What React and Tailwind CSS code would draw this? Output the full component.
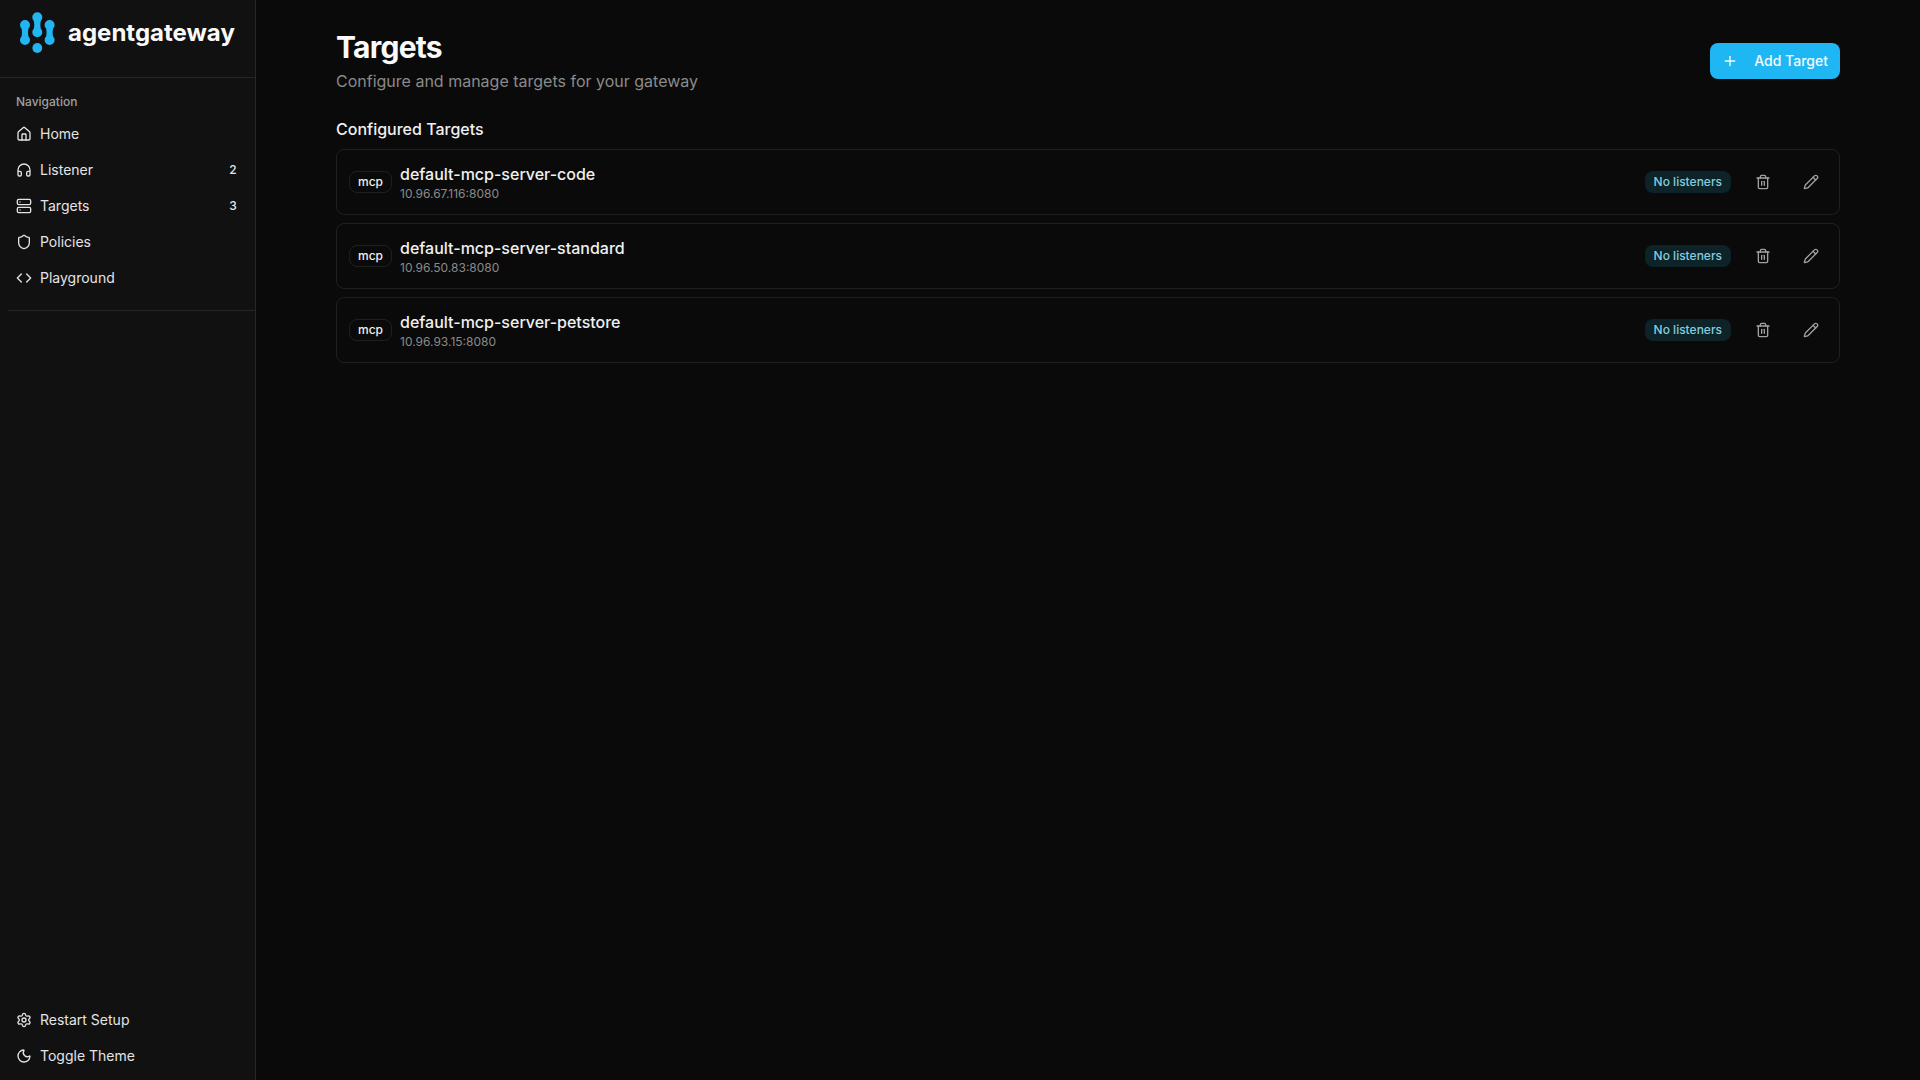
import React from "react";
import {
  Code,
  Headphones,
  Home,
  Moon,
  Pencil,
  Plus,
  Server,
  Settings,
  Shield,
  Trash2,
} from "lucide-react";

const navItems = [
  { label: "Home", icon: Home },
  { label: "Listener", icon: Headphones, count: 2 },
  { label: "Targets", icon: Server, count: 3 },
  { label: "Policies", icon: Shield },
  { label: "Playground", icon: Code },
];

const targets = [
  { name: "default-mcp-server-code", type: "mcp", address: "10.96.67.116:8080" },
  { name: "default-mcp-server-standard", type: "mcp", address: "10.96.50.83:8080" },
  { name: "default-mcp-server-petstore", type: "mcp", address: "10.96.93.15:8080" },
];

// One link of the logo: two balls joined by a narrow neck
const LINK_PATH =
  "M1.5 8.6A5 5 0 1 1 8.5 8.6Q7.6 12.5 8.5 16.4A5 5 0 1 1 1.5 16.4Q2.4 12.5 1.5 8.6z";

const Logo = () => (
  <svg width="36" height="41" viewBox="0 0 36 41" fill="#22b5f2" aria-hidden="true">
    <path d={LINK_PATH} transform="translate(0 8)" />
    <path d={LINK_PATH} transform="translate(12.3 0.3)" />
    <path d={LINK_PATH} transform="translate(24.6 8)" />
    <circle cx="17.3" cy="36" r="4.9" />
  </svg>
);

const SidebarButton = ({ icon: Icon, label }) => (
  <button
    type="button"
    className="flex h-8 w-full items-center gap-2 rounded-md px-2 text-left text-sm text-[#e4e4e4] hover:bg-[#262626]"
  >
    <Icon size={16} className="shrink-0" />
    <span>{label}</span>
  </button>
);

const Sidebar = () => (
  <aside className="flex w-64 shrink-0 flex-col border-r border-[#262626] bg-[#111111]">
    <div className="flex items-center gap-3 border-b border-[#262626] px-5 pt-3 pb-6">
      <Logo />
      <span className="text-2xl leading-10 font-bold text-[#fafafa]">agentgateway</span>
    </div>

    {/* Main navigation */}
    <nav className="p-2" aria-label="Navigation">
      <div className="flex h-8 items-center px-2 text-xs font-medium text-[#a0a0a0]">
        Navigation
      </div>
      <ul className="flex flex-col gap-1">
        {navItems.map(({ label, icon: Icon, count }) => (
          <li key={label}>
            <a
              href="#"
              className="flex h-8 items-center gap-2 rounded-md pr-1 pl-2 text-sm text-[#e4e4e4] hover:bg-[#262626]"
            >
              <Icon size={16} className="shrink-0" />
              <span className="flex-1">{label}</span>
              {count && (
                <span className="min-w-5 px-1 text-center text-xs font-medium">{count}</span>
              )}
            </a>
          </li>
        ))}
      </ul>
    </nav>
    <hr className="mt-2 ml-2 border-[#262626]" />

    {/* Footer actions */}
    <div className="mt-auto flex flex-col gap-1 p-2">
      <SidebarButton icon={Settings} label="Restart Setup" />
      <SidebarButton icon={Moon} label="Toggle Theme" />
    </div>
  </aside>
);

const IconButton = ({ icon: Icon, label }) => (
  <button
    type="button"
    aria-label={label}
    className="flex size-8 items-center justify-center rounded-md text-[#a1a1a1] hover:bg-[#262626]"
  >
    <Icon size={16} />
  </button>
);

const TargetRow = ({ target }) => (
  <li className="flex items-center justify-between rounded-lg border border-[#1f1f1f] p-3">
    <div className="flex items-center gap-2">
      <span className="rounded-lg border border-[#1f1f1f] px-2 py-0.5 text-xs font-medium text-[#f0f0f0]">
        {target.type}
      </span>
      <div>
        <h3 className="text-base font-medium text-[#f0f0f0]">{target.name}</h3>
        <p className="text-xs text-[#8a8a8a]">{target.address}</p>
      </div>
    </div>
    <div className="flex items-center gap-4">
      <span className="rounded-lg border border-transparent bg-[#0d2328] px-2 py-0.5 text-xs font-medium text-[#84cddd]">
        No listeners
      </span>
      <IconButton icon={Trash2} label={`Delete ${target.name}`} />
      <IconButton icon={Pencil} label={`Edit ${target.name}`} />
    </div>
  </li>
);

const App = () => {
  return (
    <div className="flex min-h-screen bg-[#0a0a0a] font-[Inter,sans-serif] text-[#fafafa]">
      <Sidebar />
      <main className="min-w-0 flex-1">
        <div className="mx-auto max-w-[1536px] px-4 py-[29px]">
          <div className="mb-6 flex items-center justify-between">
            <div>
              <h1 className="text-3xl font-bold tracking-tight">Targets</h1>
              <p className="mt-1 text-base text-[#8a8a8a]">
                Configure and manage targets for your gateway
              </p>
            </div>
            <button
              type="button"
              className="flex h-9 items-center gap-4 rounded-lg bg-[#1fb6f4] px-3 text-sm font-medium text-[#f5fbff] hover:bg-[#1aa5de]"
            >
              <Plus size={16} />
              Add Target
            </button>
          </div>

          <h2 className="mb-2 text-base font-medium text-[#f0f0f0]">Configured Targets</h2>
          <ul className="flex flex-col gap-2">
            {targets.map((target) => (
              <TargetRow key={target.name} target={target} />
            ))}
          </ul>
        </div>
      </main>
    </div>
  );
};

export default App;
